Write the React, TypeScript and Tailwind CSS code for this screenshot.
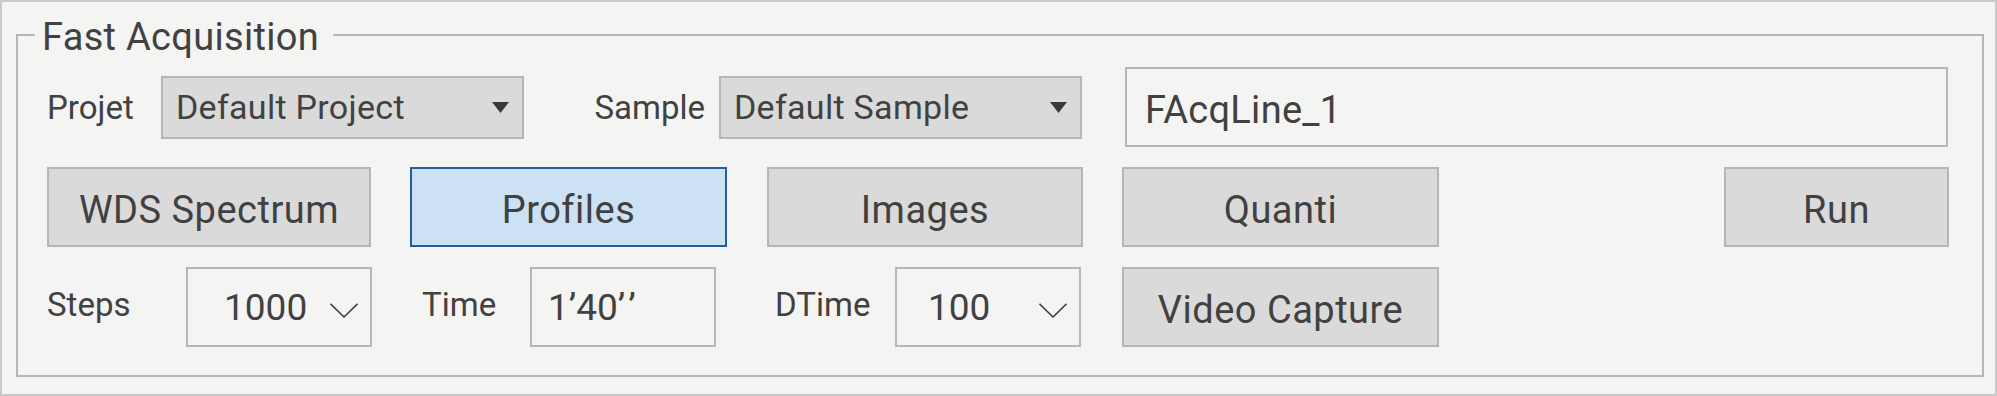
import React from "react";

function Triangle() {
  return (
    <svg width="17" height="11" viewBox="0 0 17 11">
      <polygon points="0,0 17,0 8.5,11" fill="#3a3a3a" />
    </svg>
  );
}

function Chevron() {
  return (
    <svg width="28" height="15" viewBox="0 0 28 15">
      <polyline points="0.5,0.8 14,14 27.5,0.8" fill="none" stroke="#444444" strokeWidth="1.6" />
    </svg>
  );
}

const btn =
  "flex h-[80px] items-center justify-center border-2 border-[#b6b6b6] bg-[#dadada] pt-[6px] text-[38px] leading-none tracking-[0.5px]";

export default function App() {
  return (
    <div className="h-[396px] w-[1997px] border-2 border-[#c9c9c9] bg-[#f4f4f2] pl-[14px] pr-[11px] pt-[32px] font-['Roboto',sans-serif] text-[#414141]">
      <div className="relative h-[343px] border-2 border-[#b6b6b6] pl-[29px] pr-[33px] pt-[31px]">
        <span className="absolute left-[17px] top-[-18px] bg-[#f4f4f2] pl-[7px] pr-[14px] text-[38px] leading-none tracking-[0.3px]">
          Fast Acquisition
        </span>

        {/* Row 1 */}
        <div className="flex h-[80px] items-center">
          <div className="w-[114px] text-[33px] leading-none">Projet</div>
          <div className="flex h-[63px] w-[363px] items-center justify-between border-2 border-[#b6b6b6] bg-[#dadada] pl-[13px] pr-[13px]">
            <span className="text-[34px] leading-none tracking-[0.3px]">Default Project</span>
            <Triangle />
          </div>
          <div className="w-[195px] pr-[14px] text-right text-[33px] leading-none">Sample</div>
          <div className="flex h-[63px] w-[363px] items-center justify-between border-2 border-[#b6b6b6] bg-[#dadada] pl-[13px] pr-[13px]">
            <span className="text-[34px] leading-none tracking-[0.3px]">Default Sample</span>
            <Triangle />
          </div>
          <div className="ml-[43px] flex h-[80px] w-[823px] items-center border-2 border-[#b6b6b6] pl-[18px] pt-[6px] text-[38px] leading-none tracking-[0.3px]">
            FAcqLine_1
          </div>
        </div>

        {/* Row 2 */}
        <div className="mt-[20px] flex h-[80px]">
          <div className={`${btn} w-[324px]`}>WDS Spectrum</div>
          <div className="ml-[39px] flex h-[80px] w-[317px] items-center justify-center border-2 border-[#1f60a3] bg-[#cce1f4] pt-[6px] text-[38px] leading-none tracking-[0.5px]">
            Profiles
          </div>
          <div className={`${btn} ml-[40px] w-[316px]`}>Images</div>
          <div className={`${btn} ml-[39px] w-[317px]`}>Quanti</div>
          <div className={`${btn} ml-auto w-[225px]`}>Run</div>
        </div>

        {/* Row 3 */}
        <div className="mt-[20px] flex h-[80px] items-center">
          <div className="w-[139px] pb-[6px] text-[33px] leading-none">Steps</div>
          <div className="flex h-[80px] w-[186px] items-center justify-between border-2 border-[#b6b6b6] pl-[36px] pr-[12px]">
            <span className="text-[37px] leading-none">1000</span>
            <span className="pt-[6px]">
              <Chevron />
            </span>
          </div>
          <div className="w-[158px] pb-[6px] pl-[50px] text-[33px] leading-none">Time</div>
          <div className="flex h-[80px] w-[186px] items-center border-2 border-[#b6b6b6] pl-[16px] text-[37px] leading-none">
            <span>1’40’</span>
            <span className="ml-[3px]">’</span>
          </div>
          <div className="w-[179px] pb-[6px] pl-[59px] text-[33px] leading-none">DTime</div>
          <div className="flex h-[80px] w-[186px] items-center justify-between border-2 border-[#b6b6b6] pl-[31px] pr-[12px]">
            <span className="text-[37px] leading-none">100</span>
            <span className="pt-[6px]">
              <Chevron />
            </span>
          </div>
          <div className={`${btn} ml-[41px] w-[317px]`}>Video Capture</div>
        </div>
      </div>
    </div>
  );
}
